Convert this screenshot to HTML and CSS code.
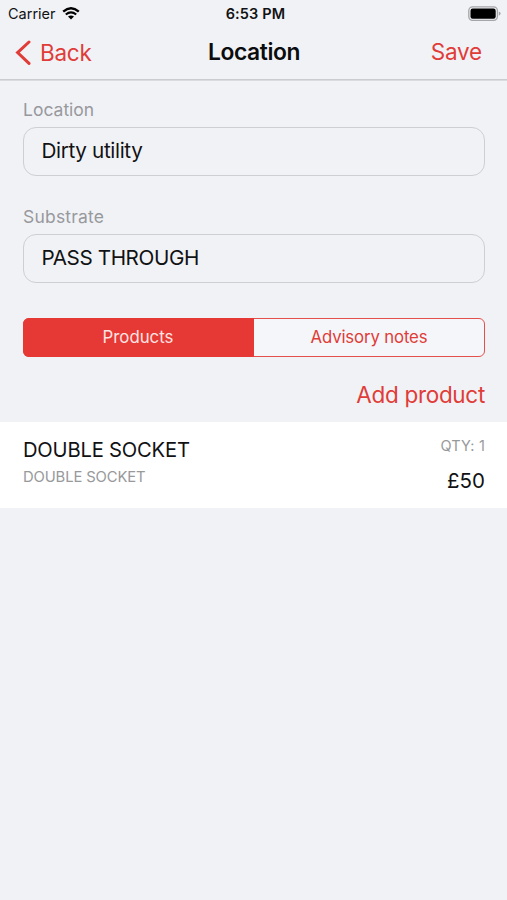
FILE: index.html
```html
<!DOCTYPE html>
<html lang="en">
<head>
<meta charset="utf-8">
<title>Location</title>
<link rel="stylesheet" href="styles.css">
</head>
<body>
<header class="header">
  <div class="status">
    <div class="status-left"><span class="carrier">Carrier</span>
      <svg class="wifi" width="18" height="13" viewBox="0 0 18 13"><path d="M1.2 4.7Q9-2.2 16.8 4.7" fill="none" stroke="#000" stroke-width="2.4"/><path d="M3.8 7.5Q9 3.2 14.2 7.5" fill="none" stroke="#000" stroke-width="2.2"/><path d="M6 9.6Q9 7.2 12 9.6L9 12.6Z"/></svg>
    </div>
    <span class="clock">6:53 PM</span>
    <svg class="battery" width="33" height="16" viewBox="0 0 33 16"><rect x=".8" y=".8" width="28.6" height="13.6" rx="3.8" fill="#f1f2f6" stroke="#a5a5a8" stroke-width="1.3"/><rect x="2.5" y="2.5" width="25.2" height="10.2" rx="2.2"/><path d="M30.8 5.4Q32.6 6 32.6 7.6T30.8 9.8Z" fill="#a5a5a8"/></svg>
  </div>
  <nav class="nav">
    <a class="back"><svg width="16" height="26" viewBox="0 0 16 26"><path d="M14 2 2.6 12.6 14 23.4" fill="none" stroke="#e03c38" stroke-width="3" stroke-linecap="round"/></svg><span class="back-text">Back</span></a>
    <h1 class="title">Location</h1>
    <a class="save">Save</a>
  </nav>
</header>
<main>
  <form class="form">
    <div class="label">Location</div>
    <div class="field">Dirty utility</div>
    <div class="label label-second">Substrate</div>
    <div class="field field-caps">PASS THROUGH</div>
    <div class="tabs">
      <div class="tab tab-active">Products</div>
      <div class="tab">Advisory notes</div>
    </div>
    <div class="add">Add product</div>
  </form>
  <section class="product">
    <div class="info"><div class="name">DOUBLE SOCKET</div><div class="detail">DOUBLE SOCKET</div></div>
    <div class="amount"><div class="qty">QTY: 1</div><div class="price">£50</div></div>
  </section>
</main>
</body>
</html>
```
FILE: styles.css
```css
* { box-sizing: border-box; }
body { margin: 0; min-height: 900px; background: #f1f2f6; color: #111214; font-family: Inter, "Liberation Sans", sans-serif; white-space: nowrap; }
.header { height: 80px; border-bottom: 1px solid #cbccd0; box-shadow: 0 1px #dadbdf; }
.status { height: 27px; padding: 0 6px 0 8px; display: grid; grid-template-columns: 1fr auto 1fr; align-items: center; font-size: 14.5px; line-height: 27px; }
.status-left { display: flex; align-items: center; gap: 6px; }
.clock { font-weight: 600; letter-spacing: .15px; padding-left: 2px; }
.battery { justify-self: end; }
.nav { height: 50px; padding: 0 25px 0 15px; display: grid; grid-template-columns: 1fr auto 1fr; align-items: center; font-size: 22.5px; line-height: 48px; color: #e03c38; }
.back { display: flex; align-items: center; gap: 9px; padding-top: 2px; letter-spacing: -.25px; }
.title { margin: 0 0 0 11px; font-size: 22.8px; font-weight: 600; letter-spacing: -.38px; color: #0b0c0e; }
.save { text-align: right; letter-spacing: -.2px; }
.form { padding: 19px 22px 0 23px; }
.label { height: 28px; line-height: 22px; font-size: 17.5px; color: #98999d; }
.label-second { margin-top: 30px; letter-spacing: .2px; }
.field { height: 49px; border: 1.5px solid #cecfd3; border-radius: 13px; padding-left: 17.5px; font-size: 20.7px; line-height: 46px; letter-spacing: -.35px; }
.label-second + .field { margin-top: -.5px; }
.field-caps { letter-spacing: -.42px; }
.tabs { margin-top: 35.5px; height: 39px; display: grid; grid-template-columns: 1fr 1fr; border: 1px solid #e4504c; border-radius: 6px; background: #f5f6f9; }
.tab { font-size: 16.8px; line-height: 36px; text-align: center; letter-spacing: -.15px; color: #e03c38; }
.tab-active { margin: -1px 0 -1px -1px; border-radius: 6px 0 0 6px; padding: 1px 1px 0 0; letter-spacing: 0; background: #e63935; color: #fde3e2; }
.add { height: 65px; padding-top: 19px; line-height: 37px; font-size: 22.5px; text-align: right; letter-spacing: -.3px; color: #e03c38; }
.product { height: 86px; padding: 15px 22px 0 23px; background: #fff; display: flex; justify-content: space-between; }
.name { height: 27px; line-height: 25px; font-size: 20.2px; letter-spacing: -.2px; }
.detail { line-height: 26px; font-size: 14.8px; letter-spacing: -.13px; color: #98999b; }
.amount { text-align: right; }
.qty { height: 18px; line-height: 18px; font-size: 14.5px; letter-spacing: .2px; color: #98999b; }
.price { line-height: 52px; font-size: 20.5px; }
```
